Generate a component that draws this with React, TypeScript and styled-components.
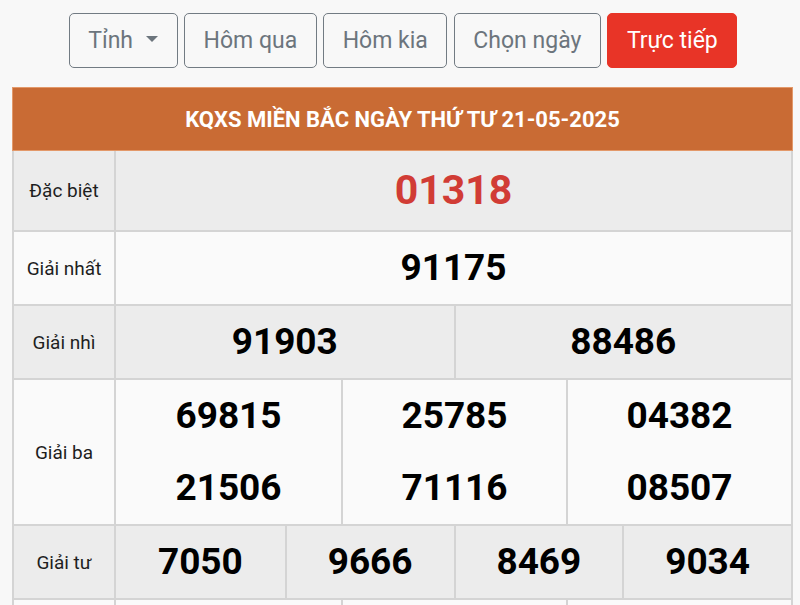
import React from "react";
import styled, { createGlobalStyle } from "styled-components";

const Global = createGlobalStyle`
  html, body { margin: 0; padding: 0; background: #f8f8f8; }
  body { font-family: Roboto, "Liberation Sans", Arial, sans-serif; }
  * { box-sizing: border-box; }
`;

const Page = styled.div`
  width: 800px;
  padding: 13px 7px 0 12px;
`;

const Toolbar = styled.div`
  display: flex;
  justify-content: center;
  gap: 6.5px;
  margin-right: -1px;
`;

const Btn = styled.button<{ $live?: boolean }>`
  height: 55px;
  padding: 0 18.5px;
  border-radius: 5px;
  font-family: Roboto, "Liberation Sans", Arial, sans-serif;
  font-size: 23px;
  display: flex;
  align-items: center;
  gap: 13px;
  border: 1.5px solid ${(p) => (p.$live ? "#e83427" : "#727b83")};
  background: ${(p) => (p.$live ? "#e83427" : "transparent")};
  color: ${(p) => (p.$live ? "#ffffff" : "#6c757d")};
  cursor: pointer;
`;

const Caret = styled.span`
  width: 0;
  height: 0;
  border-left: 6px solid transparent;
  border-right: 6px solid transparent;
  border-top: 6px solid #6c757d;
  margin-top: -3px;
`;

const Table = styled.div`
  margin-top: 19px;
  width: 781px;
  border-left: 2px solid #d4d4d4;
  border-right: 2px solid #d4d4d4;
`;

const Header = styled.div`
  height: 64px;
  margin: 0 -2px;
  background: #c96b34;
  border: 1px solid #e3996a;
  color: #fff;
  font-weight: 700;
  font-size: 22px;
  display: flex;
  align-items: center;
  justify-content: center;
`;

const Row = styled.div<{ $alt: boolean; $h: number }>`
  display: grid;
  grid-template-columns: 100px 2px 1fr;
  min-height: ${(p) => p.$h}px;
  border-bottom: 2px solid #d4d4d4;
  background: ${(p) => (p.$alt ? "#ececec" : "#fafafa")};
`;

const Divider = styled.div`
  background: #d4d4d4;
`;

const Label = styled.div`
  display: flex;
  align-items: center;
  justify-content: center;
  font-size: 19px;
  color: #1e1e1e;
`;

const Values = styled.div<{ $cols: number }>`
  display: grid;
  grid-template-columns: repeat(${(p) => p.$cols}, 1fr);
`;

const Cell = styled.div<{ $first: boolean }>`
  display: flex;
  flex-direction: column;
  justify-content: center;
  border-left: ${(p) => (p.$first ? "none" : "2px solid #d4d4d4")};
`;

const Num = styled.div<{ $special?: boolean }>`
  height: 72px;
  display: flex;
  align-items: center;
  justify-content: center;
  font-weight: 700;
  font-size: ${(p) => (p.$special ? "41px" : "37px")};
  color: ${(p) => (p.$special ? "#d13c35" : "#000")};
  padding-bottom: 2px;
`;

type Prize = { label: string; cols: number; nums: string[]; special?: boolean };

const prizes: Prize[] = [
  { label: "Đặc biệt", cols: 1, nums: ["01318"], special: true },
  { label: "Giải nhất", cols: 1, nums: ["91175"] },
  { label: "Giải nhì", cols: 2, nums: ["91903", "88486"] },
  { label: "Giải ba", cols: 3, nums: ["69815", "21506", "25785", "71116", "04382", "08507"] },
  { label: "Giải tư", cols: 4, nums: ["7050", "9666", "8469", "9034"] },
  { label: "Giải năm", cols: 3, nums: ["5723", "1841", "0392", "6607", "2258", "4170"] },
  { label: "Giải sáu", cols: 3, nums: ["581", "236", "704"] },
  { label: "Giải bảy", cols: 4, nums: ["18", "92", "47", "05"] },
];

export default function App() {
  return (
    <Page>
      <Global />
      <Toolbar>
        <Btn>
          Tỉnh <Caret />
        </Btn>
        <Btn>Hôm qua</Btn>
        <Btn>Hôm kia</Btn>
        <Btn>Chọn ngày</Btn>
        <Btn $live>Trực tiếp</Btn>
      </Toolbar>
      <Table>
        <Header>KQXS MIỀN BẮC NGÀY THỨ TƯ 21-05-2025</Header>
        {prizes.map((p, i) => {
          const perCol = Math.ceil(p.nums.length / p.cols);
          const cols = Array.from({ length: p.cols }, (_, c) =>
            p.nums.slice(c * perCol, c * perCol + perCol)
          );
          return (
            <Row key={p.label} $alt={i % 2 === 0} $h={p.special ? 81 : 74}>
              <Label>{p.label}</Label>
              <Divider />
              <Values $cols={p.cols}>
                {cols.map((col, c) => (
                  <Cell key={c} $first={c === 0}>
                    {col.map((n) => (
                      <Num key={n} $special={p.special}>
                        {n}
                      </Num>
                    ))}
                  </Cell>
                ))}
              </Values>
            </Row>
          );
        })}
      </Table>
    </Page>
  );
}
